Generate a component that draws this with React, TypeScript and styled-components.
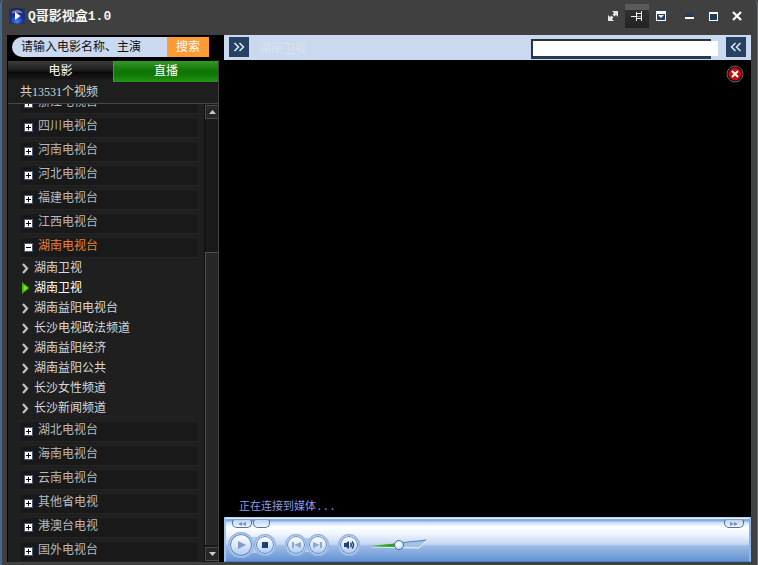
import React, { useState } from "react";
import styled, { createGlobalStyle, css } from "styled-components";

const Global = createGlobalStyle`
  * { box-sizing: border-box; }
  html, body, #root { height: 100%; margin: 0; }
  body {
    background: #404040;
    overflow: hidden;
    font-family: "Liberation Mono", "Noto Sans CJK SC", monospace;
    font-size: 12px;
    line-height: 20px;
  }
  button, input {
    font: inherit;
    margin: 0;
    padding: 0;
    border: 0;
    background: none;
    color: inherit;
    border-radius: 0;
  }
  svg { display: block; flex: none; }
  ul { list-style: none; margin: 0; padding: 0; }
`;

const Window = styled.div`
  height: 100%;
  display: flex;
  flex-direction: column;
  background: #404040;
  border-left: 2px solid #45688f;
  border-right: 1px solid #70747a;
  border-top-left-radius: 4px;
  border-top-right-radius: 4px;
`;

const TitleBar = styled.header`
  height: 35px;
  flex: none;
  display: flex;
  align-items: flex-start;
  padding: 4px 8px 0 7px;
`;

const Title = styled.h1`
  flex: 1;
  display: flex;
  align-items: center;
  gap: 3px;
  height: 24px;
  margin: 0;
  color: #f4f4f4;
  font-size: 13px;
  font-weight: bold;
`;

const TitleText = styled.span`
  padding-top: 2px;
`;

const WindowButton = styled.button<{ $active?: boolean; $spaced?: boolean }>`
  width: 24px;
  height: 24px;
  margin-left: ${(p) => (p.$spaced ? 4 : 0)}px;
  display: grid;
  place-items: center;
  ${(p) =>
    p.$active &&
    css`
      background: linear-gradient(#5a5a5a 0 25%, #303030 25%, #222 100%);
    `}
`;

const Body = styled.div`
  flex: 1;
  min-height: 0;
  display: grid;
  grid-template-columns: 212px minmax(0, 1fr);
  column-gap: 5px;
  margin: 0 6px 3px 5px;
  background: #000;
`;

const Sidebar = styled.aside`
  min-height: 0;
  display: flex;
  flex-direction: column;
  padding-left: 1px;
`;

const SearchForm = styled.form`
  display: flex;
  flex: none;
  height: 25px;
  padding: 2px 10px 3px 4px;
`;

const SearchInput = styled.input`
  flex: 1;
  min-width: 0;
  padding: 1px 0 0 9px;
  border-radius: 10px 0 0 10px;
  background: #cbd9f0;
  color: #111;
`;

const SearchButton = styled.button`
  width: 42px;
  padding-top: 1px;
  background: #ff9a35;
  color: #fff;
`;

const Tabs = styled.div`
  display: grid;
  grid-template-columns: 1fr 1fr;
  height: 22px;
  flex: none;
  padding-top: 1px;
  border-right: 1px solid #444;
`;

const Tab = styled.button<{ $selected: boolean }>`
  padding-top: 1px;
  color: #fff;
  border-left: ${(p) => (p.$selected ? "1px solid #3fa02c" : "0")};
  border-bottom: 1px solid ${(p) => (p.$selected ? "#43a533" : "#333")};
  background: ${(p) =>
    p.$selected
      ? "linear-gradient(#35982a, #117606 45%, #107807 65%, #239414)"
      : "linear-gradient(#3d3d3d, #1c1c1c 45%, #0a0a0a 55%, #202020)"};
`;

const Count = styled.p`
  flex: none;
  height: 22px;
  margin: 0;
  padding-left: 12px;
  color: #d4d4d4;
  background: #1e1e1e;
  border-bottom: 1px solid #484848;
  border-right: 1px solid #444;
  font-family: "Liberation Serif", "Noto Sans CJK SC", serif;
`;

const ListArea = styled.div`
  flex: 1;
  min-height: 0;
  display: flex;
  background: #1f1f1f;
  border-right: 1px solid #444;
`;

const Stations = styled.ul`
  flex: 1;
  min-width: 0;
  overflow: hidden;
  padding: 0 5px 0 11px;

  > li { margin-bottom: 3px; }
  > li:first-child { margin-top: -11px; }
`;

const StationRow = styled.button<{ $open?: boolean }>`
  display: flex;
  width: 100%;
  height: 21px;
  gap: 5px;
  padding-left: 4px;
  align-items: flex-start;
  line-height: 18px;
  border: 1px solid #242424;
  background: #191919;
  color: ${(p) => (p.$open ? "#e8823a" : "#b9b9b9")};

  svg { margin-top: 5px; }
`;

const ChannelRow = styled.button<{ $playing?: boolean }>`
  display: flex;
  align-items: center;
  gap: 4px;
  width: 100%;
  height: 20px;
  padding-left: 3px;
  color: ${(p) => (p.$playing ? "#fff" : "#d8d8d8")};
`;

const ChannelName = styled.span`
  padding-top: 2px;
`;

const ScrollBar = styled.div`
  width: 14px;
  flex: none;
  display: flex;
  flex-direction: column;
  padding: 1px 0;
  background: #191919;
  border-left: 1px solid #111;
`;

const ScrollButton = styled.button`
  height: 14px;
  display: grid;
  place-items: center;
  background: #262626;
  border: 1px solid #4a4a4a;
  border-right: 0;
`;

const ScrollTrack = styled.div`
  flex: 1;
  display: grid;
  grid-template-rows: 134fr 294fr;
  padding-bottom: 2px;
`;

const ScrollThumb = styled.div`
  grid-row: 2;
  background: #262626;
  border-top: 1px solid #505050;
  border-left: 1px solid #505050;
`;

const Main = styled.main`
  min-width: 0;
  min-height: 0;
  display: flex;
  flex-direction: column;
`;

const NowPlaying = styled.div`
  height: 25px;
  flex: none;
  display: flex;
  align-items: center;
  padding: 0 5px 1px;
  background: #cad8f0;
`;

const PanelButton = styled.button`
  width: 20px;
  height: 20px;
  display: grid;
  place-items: center;
  background: #264163;
`;

const NowTitle = styled.span`
  flex: 1;
  padding: 5px 0 0 10px;
  color: #dbe3eb;
`;

const AddressFrame = styled.div`
  width: 180px;
  height: 20px;
  margin: 4px 15px 0 0;
  padding: 2px 0 0 2px;
  background: linear-gradient(#2b343d 70%, #263e59);
`;

const AddressInput = styled.input`
  display: block;
  width: 185px;
  height: 15px;
  background: #fff;
  color: #222;
`;

const Screen = styled.section`
  flex: 1;
  min-height: 0;
  display: flex;
  flex-direction: column;
  justify-content: space-between;
  padding: 5px 7px 0 15px;
`;

const CloseVideo = styled.button`
  align-self: flex-end;
`;

const Status = styled.p`
  margin: 0;
  color: #8c9ae6;
  font-size: 11px;
`;

const Player = styled.footer`
  height: 45px;
  flex: none;
  display: flex;
  flex-direction: column;
  padding: 0 5px 0 2px;
  border: solid;
  border-width: 1px 2px 1px 2px;
  border-color: #b9d4f3 #8db4e4 #4e80c3 #9cc3ee;
  background: linear-gradient(
    #e5f0fc 0 1px, #7faee0 1px 3px, #c4daf5 4px, #ffffff 9px,
    #f0f5fd 16px, #c5d8f2 26px, #9dbce6 28px, #6796d5 42px
  );
`;

const SeekRow = styled.div`
  display: flex;
  gap: 1px;
  height: 12px;
  padding: 1px 0 0 4px;
`;

const SeekButton = styled.button<{ $wide?: boolean; $end?: boolean }>`
  width: ${(p) => (p.$wide ? 20 : 17)}px;
  height: 9px;
  display: grid;
  place-items: center;
  margin-left: ${(p) => (p.$end ? "auto" : "0")};
  border: 1px solid #4a73b0;
  border-top-color: #7ba0d4;
  border-radius: 3px 3px 5px 5px;
  background: linear-gradient(#bcd3f1, #f2f7ff);
`;

const Controls = styled.div`
  display: flex;
  align-items: center;
  height: 30px;
`;

const Pair = styled.div`
  display: flex;
  align-items: center;
  margin-right: 9px;
  border-radius: 13px;
  background: linear-gradient(transparent 20%, #b3cdf0 20% 80%, transparent 80%);
`;

const Round = styled.button<{ $big?: boolean }>`
  width: ${(p) => (p.$big ? 26 : 22)}px;
  height: ${(p) => (p.$big ? 26 : 22)}px;
  display: grid;
  place-items: center;
  border-radius: 50%;
  border: 2px solid #b3cdf0;
  outline: 1px solid #8fb0dd;
  outline-offset: -1px;
  background: linear-gradient(#ffffff, #dce9fa 50%, #a9c7ef);
  box-shadow: inset 0 0 0 1px #5b82ba;
`;

const Volume = styled.label`
  display: grid;
  width: 56px;
  align-items: center;
  margin-left: 3px;

  > * { grid-area: 1 / 1; }
`;

const VolumeInput = styled.input`
  appearance: none;
  width: 100%;
  height: 14px;

  &::-webkit-slider-thumb {
    appearance: none;
    width: 10px;
    height: 10px;
    border: 1px solid #426ba6;
    border-radius: 50%;
    background: radial-gradient(circle at 40% 35%, #fff, #bdd5f3);
  }
`;

const Logo = () => (
  <svg width="16" height="16" viewBox="0 0 16 16" aria-hidden="true">
    <defs>
      <radialGradient id="orb" cx="50%" cy="85%" r="80%">
        <stop offset="0" stopColor="#3f86f5" />
        <stop offset="0.5" stopColor="#1b32a8" />
        <stop offset="1" stopColor="#151c56" />
      </radialGradient>
    </defs>
    <rect width="16" height="16" fill="#26365a" />
    <circle cx="8" cy="8" r="7.8" fill="url(#orb)" />
    <path d="M2 5.500C4 .6 12 .6 14 5.500 10 4.500 6 4.500 2 5.500Z" fill="#8e9cd0" opacity=".75" />
    <path d="M6 4v8l5.500-4Z" fill="#fff" />
  </svg>
);

const ResizeIcon = () => (
  <svg width="10" height="10" viewBox="0 0 10 10" fill="#e4e6e8" aria-hidden="true">
    <path d="M4 0h6v6L8 4 6.500 5.500 4.500 3.500 6 2ZM0 4l2 2 1.500-1.500 2 2L4 8l2 2H0Z" />
  </svg>
);

const PinIcon = () => (
  <svg width="12" height="10" viewBox="0 0 12 10" stroke="#f2f2f2" fill="none" shapeRendering="crispEdges" aria-hidden="true">
    <path d="M0 5.500h5M5.500 1v9M10.500 0v10M5 2.500h6M5 7.500h6" />
    <path d="M5 5.500h6" opacity=".5" />
  </svg>
);

const MenuIcon = () => (
  <svg width="10" height="10" viewBox="0 0 10 10" aria-hidden="true">
    <rect width="10" height="10" fill="#fff" />
    <rect x="1" y="3" width="8" height="6" fill="#27425f" />
    <path d="M2 4h6L5 7Z" fill="#e8eef5" />
  </svg>
);

const MinIcon = () => (
  <svg width="10" height="10" viewBox="0 0 10 10" aria-hidden="true">
    <rect x="1" y="3" width="8" height="3" fill="#1c3a63" />
    <rect x="1" y="6" width="9" height="2" fill="#fff" />
  </svg>
);

const MaxIcon = () => (
  <svg width="10" height="10" viewBox="0 0 10 10" aria-hidden="true">
    <rect x="1" y="1" width="9" height="9" fill="#fff" />
    <rect x="2" y="3" width="7" height="6" fill="#1d3a60" />
  </svg>
);

const CrossIcon = () => (
  <svg width="10" height="10" viewBox="0 0 10 10" aria-hidden="true">
    <path d="M1 1l8 8M9 1L1 9" stroke="#fff" strokeWidth="2.200" />
  </svg>
);

const DoubleChevron = ({ left }: { left?: boolean }) => (
  <svg width="12" height="10" viewBox="0 0 12 10" fill="none" stroke="#e6edf7" strokeWidth="1.500" aria-hidden="true">
    <path d={left ? "M5.500 1l-4 4 4 4M10.500 1l-4 4 4 4" : "M1.500 1l4 4-4 4M6.500 1l4 4-4 4"} />
  </svg>
);

const ToggleIcon = ({ open }: { open?: boolean }) => (
  <svg width="9" height="9" viewBox="0 0 9 9" aria-hidden="true">
    <rect width="9" height="9" fill="#4b5672" />
    <rect x="1" y="1" width="7" height="7" fill="#fff" />
    <path d={open ? "M2 4.500h5" : "M2 4.500h5M4.500 2v5"} stroke="#000" />
  </svg>
);

const ChannelMark = ({ playing }: { playing?: boolean }) => (
  <svg width="8" height="12" viewBox="0 0 8 12" aria-hidden="true">
    {playing ? (
      <>
        <path d="M0 0l7.500 6L0 12Z" fill="#3dae08" />
        <path d="M1.500 2.500L6 6 1.500 9.500Z" fill="#7be01c" />
      </>
    ) : (
      <path d="M1 2l4 4.500L1 11" stroke="#c4c4c4" strokeWidth="2.200" fill="none" />
    )}
  </svg>
);

const ScrollArrow = ({ down }: { down?: boolean }) => (
  <svg width="7" height="4" viewBox="0 0 7 4" aria-hidden="true">
    <path d={down ? "M0 0h7L3.500 4Z" : "M0 4h7L3.500 0Z"} fill="#ccc" />
  </svg>
);

const RedClose = () => (
  <svg width="18" height="18" viewBox="0 0 18 18" aria-hidden="true">
    <circle cx="9" cy="9" r="8" fill="#180808" stroke="#68686a" />
    <circle cx="9" cy="9" r="6.500" fill="#c80b0b" />
    <path d="M6 6l6 6M12 6l-6 6" stroke="#fff" strokeWidth="2" />
  </svg>
);

const SeekIcon = ({ forward }: { forward?: boolean }) => (
  <svg width="8" height="4" viewBox="0 0 8 4" fill="#8390a8" aria-hidden="true">
    <path d={forward ? "M0 0l4 2-4 2ZM4 0l4 2-4 2Z" : "M4 0v4L0 2ZM8 0v4L4 2Z"} />
  </svg>
);

const PlayIcon = () => (
  <svg width="10" height="10" viewBox="0 0 10 10" aria-hidden="true">
    <path d="M2 1l8 4-8 4Z" fill="#7f9cc6" />
  </svg>
);

const StopIcon = () => (
  <svg width="6" height="6" viewBox="0 0 6 6" aria-hidden="true">
    <rect width="6" height="6" fill="#1d3e77" />
  </svg>
);

const SkipIcon = ({ forward }: { forward?: boolean }) => (
  <svg width="10" height="8" viewBox="0 0 10 8" fill="#8ea7cd" aria-hidden="true">
    <path d={forward ? "M0 1l7 3-7 3ZM7 1h2v6H7Z" : "M10 1v6L3 4ZM1 1h2v6H1Z"} />
  </svg>
);

const SpeakerIcon = () => (
  <svg width="11" height="10" viewBox="0 0 11 10" aria-hidden="true">
    <path d="M0 3h2l3-2v8L2 7H0Z" fill="#1f4179" />
    <path d="M6.500 3q1.500 2 0 4M8 1.500q3 3.500 0 7" stroke="#1f4179" strokeWidth="1.500" fill="none" />
  </svg>
);

const VolumeWedge = () => (
  <svg width="56" height="14" viewBox="0 0 56 14" aria-hidden="true">
    <path d="M0 8L55 2 47 10Z" fill="#a5c1e8" />
    <path d="M0 8L27 5V10L0 9Z" fill="#2fa21c" />
    <path d="M27 5L55 2" stroke="#5a82b9" fill="none" />
    <path d="M55 2l-8 8L0 9" stroke="#edf5ff" fill="none" />
  </svg>
);

const channels = [
  "湖南卫视",
  "湖南卫视",
  "湖南益阳电视台",
  "长沙电视政法频道",
  "湖南益阳经济",
  "湖南益阳公共",
  "长沙女性频道",
  "长沙新闻频道",
];

const stations: { name: string; channels?: string[] }[] = [
  { name: "浙江电视台" },
  { name: "四川电视台" },
  { name: "河南电视台" },
  { name: "河北电视台" },
  { name: "福建电视台" },
  { name: "江西电视台" },
  { name: "湖南电视台", channels },
  { name: "湖北电视台" },
  { name: "海南电视台" },
  { name: "云南电视台" },
  { name: "其他省电视" },
  { name: "港澳台电视" },
  { name: "国外电视台" },
];

export default function App() {
  const [tab, setTab] = useState("直播");
  const [playing, setPlaying] = useState(1);
  const [query, setQuery] = useState("请输入电影名称、主演");

  return (
    <>
      <Global />
      <Window>
        <TitleBar>
          <Title>
            <Logo />
            <TitleText>Q哥影视盒1.0</TitleText>
          </Title>
          <WindowButton aria-label="缩放"><ResizeIcon /></WindowButton>
          <WindowButton aria-label="置顶" $active><PinIcon /></WindowButton>
          <WindowButton aria-label="菜单"><MenuIcon /></WindowButton>
          <WindowButton aria-label="最小化" $spaced><MinIcon /></WindowButton>
          <WindowButton aria-label="最大化"><MaxIcon /></WindowButton>
          <WindowButton aria-label="关闭"><CrossIcon /></WindowButton>
        </TitleBar>
        <Body>
          <Sidebar>
            <SearchForm onSubmit={(e) => e.preventDefault()}>
              <SearchInput aria-label="搜索电影" value={query} onChange={(e) => setQuery(e.target.value)} />
              <SearchButton type="submit">搜索</SearchButton>
            </SearchForm>
            <Tabs role="tablist">
              {["电影", "直播"].map((name) => (
                <Tab key={name} role="tab" aria-selected={tab === name} $selected={tab === name} onClick={() => setTab(name)}>
                  {name}
                </Tab>
              ))}
            </Tabs>
            <Count>共13531个视频</Count>
            <ListArea>
              <Stations>
                {stations.map((s) => (
                  <li key={s.name}>
                    <StationRow $open={!!s.channels} aria-expanded={!!s.channels}>
                      <ToggleIcon open={!!s.channels} />
                      {s.name}
                    </StationRow>
                    {s.channels && (
                      <ul>
                        {s.channels.map((c, i) => (
                          <li key={i}>
                            <ChannelRow $playing={i === playing} onClick={() => setPlaying(i)}>
                              <ChannelMark playing={i === playing} />
                              <ChannelName>{c}</ChannelName>
                            </ChannelRow>
                          </li>
                        ))}
                      </ul>
                    )}
                  </li>
                ))}
              </Stations>
              <ScrollBar>
                <ScrollButton aria-label="向上滚动"><ScrollArrow /></ScrollButton>
                <ScrollTrack><ScrollThumb /></ScrollTrack>
                <ScrollButton aria-label="向下滚动"><ScrollArrow down /></ScrollButton>
              </ScrollBar>
            </ListArea>
          </Sidebar>
          <Main>
            <NowPlaying>
              <PanelButton aria-label="展开侧栏"><DoubleChevron /></PanelButton>
              <NowTitle>{channels[playing]}</NowTitle>
              <AddressFrame><AddressInput aria-label="播放地址" /></AddressFrame>
              <PanelButton aria-label="收起面板"><DoubleChevron left /></PanelButton>
            </NowPlaying>
            <Screen>
              <CloseVideo aria-label="关闭视频"><RedClose /></CloseVideo>
              <Status>正在连接到媒体...</Status>
            </Screen>
            <Player>
              <SeekRow>
                <SeekButton $wide aria-label="快退"><SeekIcon /></SeekButton>
                <SeekButton aria-label="进度" />
                <SeekButton $wide $end aria-label="快进"><SeekIcon forward /></SeekButton>
              </SeekRow>
              <Controls>
                <Pair>
                  <Round $big aria-label="播放"><PlayIcon /></Round>
                  <Round aria-label="停止"><StopIcon /></Round>
                </Pair>
                <Pair>
                  <Round aria-label="上一个"><SkipIcon /></Round>
                  <Round aria-label="下一个"><SkipIcon forward /></Round>
                </Pair>
                <Pair>
                  <Round aria-label="静音"><SpeakerIcon /></Round>
                </Pair>
                <Volume>
                  <VolumeWedge />
                  <VolumeInput type="range" aria-label="音量" min="0" max="100" defaultValue="48" />
                </Volume>
              </Controls>
            </Player>
          </Main>
        </Body>
      </Window>
    </>
  );
}
